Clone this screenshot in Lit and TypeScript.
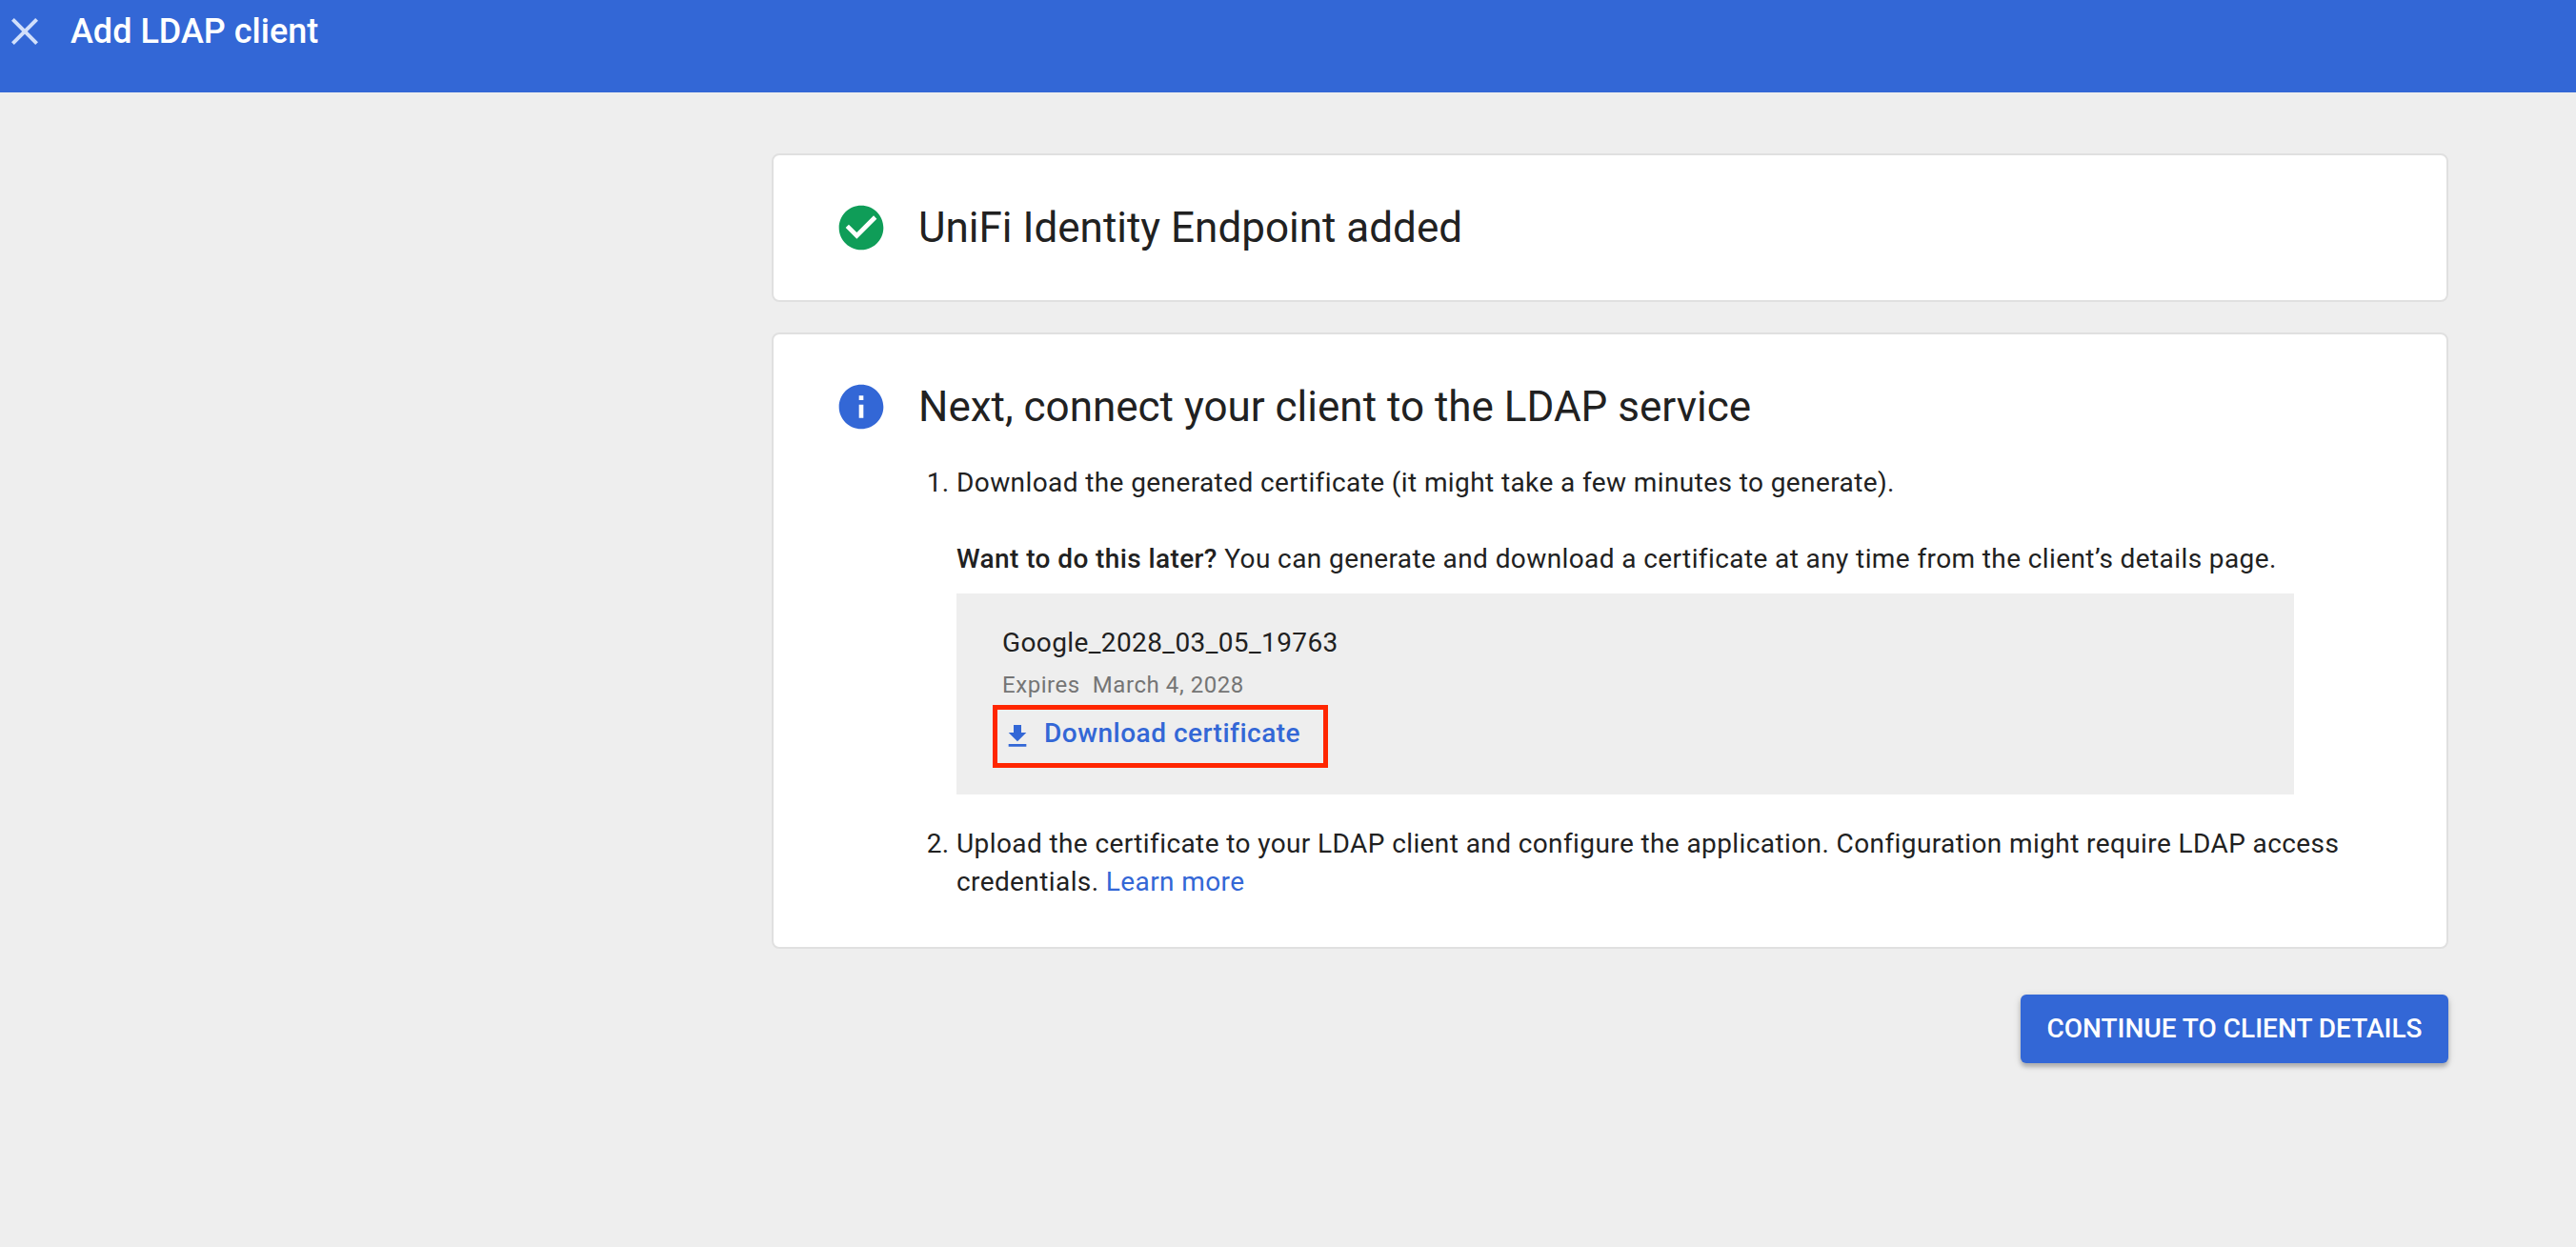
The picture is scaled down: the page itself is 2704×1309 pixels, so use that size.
import { LitElement, html, css } from "lit";
import { customElement } from "lit/decorators.js";

@customElement("app-root")
export class AppRoot extends LitElement {
  static styles = css`
    :host {
      display: flex;
      flex-direction: column;
      box-sizing: border-box;
      width: 100%;
      min-height: 100vh;
      background: #eee;
      color: #212121;
      font-family: Roboto, "Liberation Sans", sans-serif;
      font-size: 28px;
      line-height: 40px;
    }
    .bar {
      display: flex;
      align-items: flex-start;
      box-sizing: border-box;
      height: 97px;
      padding: 9px 2px 0;
      gap: 24px;
      background: #3367d6;
      color: #fff;
    }
    .close {
      display: flex;
      padding: 0;
      border: 0;
      background: none;
      color: #d1dffb;
    }
    .close svg {
      width: 48px;
      height: 48px;
    }
    .bar-title {
      margin: 0;
      font-size: 36px;
      font-weight: 500;
      line-height: 48px;
    }
    .content {
      display: flex;
      flex-direction: column;
      box-sizing: border-box;
      width: 1760px;
      margin: 64px 134px 0 auto;
      gap: 32px;
    }
    .card {
      display: grid;
      grid-template-columns: 56px 1fr;
      column-gap: 32px;
      padding: 48px 64px;
      border: 2px solid #e0e0e0;
      border-radius: 8px;
      background: #fff;
    }
    .status {
      width: 56px;
      height: 56px;
    }
    .status.done {
      color: #0f9d58;
    }
    .status.info {
      color: #3367d6;
    }
    .heading {
      margin: 0;
      font-size: 44px;
      font-weight: 400;
      line-height: 56px;
    }
    .steps {
      grid-column: 2;
      margin: 32px 0 0;
      padding: 0 0 0 40px;
      letter-spacing: 0.4px;
    }
    .step p {
      margin: 0;
    }
    .step .later {
      margin-top: 40px;
    }
    .later b {
      font-weight: 500;
    }
    .step + .step {
      margin-top: 32px;
    }
    .certificate {
      display: flex;
      flex-direction: column;
      align-items: flex-start;
      box-sizing: border-box;
      width: 1404px;
      height: 211px;
      margin-top: 16px;
      padding: 32px 38px 0;
      background: #eee;
    }
    .name {
      padding-left: 10px;
    }
    .expires {
      padding-left: 10px;
      margin-top: 4px;
      color: #757575;
      font-size: 24px;
      letter-spacing: 0.56px;
      white-space: pre;
    }
    .download {
      display: flex;
      align-items: center;
      box-sizing: border-box;
      width: 352px;
      height: 66px;
      margin-top: 1px;
      padding-left: 5px;
      border: 5px solid #ff2600;
      color: #3367d6;
      font-weight: 500;
      letter-spacing: 0.5px;
      text-decoration: none;
      gap: 12px;
    }
    .download svg {
      width: 32px;
      height: 32px;
    }
    .download span {
      padding-bottom: 6px;
    }
    .link {
      color: #3367d6;
      text-decoration: none;
    }
    .continue {
      align-self: flex-end;
      box-sizing: border-box;
      width: 449px;
      height: 72px;
      margin-top: 16px;
      padding: 0;
      border: 0;
      border-radius: 6px;
      background: #3367d6;
      box-shadow: 0 4px 4px rgba(0, 0, 0, 0.2), 0 2px 8px rgba(0, 0, 0, 0.14);
      color: #fff;
      font: 500 28px/40px Roboto, "Liberation Sans", sans-serif;
      text-transform: uppercase;
    }
  `;

  render() {
    return html`
      <header class="bar">
        <button class="close" aria-label="Close">
          <svg viewBox="0 0 24 24" fill="currentColor">
            <path d="M19 6.41 17.59 5 12 10.59 6.41 5 5 6.41 10.59 12 5 17.59 6.41 19 12 13.41 17.59 19 19 17.59 13.41 12z" />
          </svg>
        </button>
        <h1 class="bar-title">Add LDAP client</h1>
      </header>
      <main class="content">
        <section class="card">
          <svg class="status done" viewBox="0 0 24 24" fill="currentColor">
            <path d="M12 2C6.48 2 2 6.48 2 12s4.48 10 10 10 10-4.48 10-10S17.52 2 12 2zm-2 15-5-5 1.41-1.41L10 14.17l7.59-7.59L19 8l-9 9z" />
          </svg>
          <h2 class="heading">UniFi Identity Endpoint added</h2>
        </section>
        <section class="card">
          <svg class="status info" viewBox="0 0 24 24" fill="currentColor">
            <path d="M12 2C6.48 2 2 6.48 2 12s4.48 10 10 10 10-4.48 10-10S17.52 2 12 2zm1 15h-2v-6h2v6zm0-8h-2V7h2v2z" />
          </svg>
          <h2 class="heading">Next, connect your client to the LDAP service</h2>
          <ol class="steps">
            <li class="step">
              <p>Download the generated certificate (it might take a few minutes to generate).</p>
              <p class="later"><b>Want to do this later?</b> You can generate and download a certificate at any time from the client’s details page.</p>
              <div class="certificate">
                <div class="name">Google_2028_03_05_19763</div>
                <div class="expires">Expires  March 4, 2028</div>
                <a class="download">
                  <svg viewBox="0 0 24 24" fill="currentColor">
                    <path d="M19 9h-4V3H9v6H5l7 7 7-7zM5 18v2h14v-2H5z" />
                  </svg>
                  <span>Download certificate</span>
                </a>
              </div>
            </li>
            <li class="step">
              <p>Upload the certificate to your LDAP client and configure the application. Configuration might require LDAP access credentials. <a class="link">Learn more</a></p>
            </li>
          </ol>
        </section>
        <button class="continue">Continue to client details</button>
      </main>
    `;
  }
}
